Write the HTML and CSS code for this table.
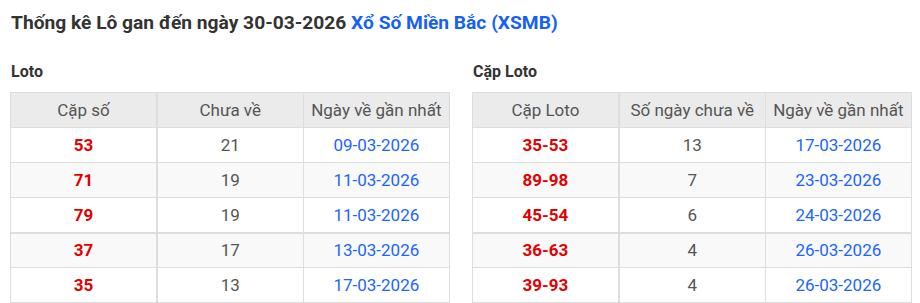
FILE: index.html
```html
<!DOCTYPE html>
<html lang="vi">
<head>
<meta charset="utf-8">
<link rel="stylesheet" href="styles.css">
</head>
<body>
<h2 class="title">Thống kê Lô gan đến ngày 30-03-2026 <span class="title-link">Xổ Số Miền Bắc (XSMB)</span></h2>
<div class="panels">
  <section class="panel">
    <h3 class="panel-title">Loto</h3>
    <table class="gan">
      <thead>
        <tr><th>Cặp số</th><th>Chưa về</th><th>Ngày về gần nhất</th></tr>
      </thead>
      <tbody>
        <tr><td class="num">53</td><td>21</td><td class="date">09-03-2026</td></tr>
        <tr class="alt"><td class="num">71</td><td>19</td><td class="date">11-03-2026</td></tr>
        <tr><td class="num">79</td><td>19</td><td class="date">11-03-2026</td></tr>
        <tr class="alt split"><td class="num">37</td><td>17</td><td class="date">13-03-2026</td></tr>
        <tr><td class="num">35</td><td>13</td><td class="date">17-03-2026</td></tr>
      </tbody>
    </table>
  </section>
  <section class="panel">
    <h3 class="panel-title">Cặp Loto</h3>
    <table class="gan">
      <thead>
        <tr><th>Cặp Loto</th><th>Số ngày chưa về</th><th>Ngày về gần nhất</th></tr>
      </thead>
      <tbody>
        <tr><td class="num">35-53</td><td>13</td><td class="date">17-03-2026</td></tr>
        <tr class="alt"><td class="num">89-98</td><td>7</td><td class="date">23-03-2026</td></tr>
        <tr><td class="num">45-54</td><td>6</td><td class="date">24-03-2026</td></tr>
        <tr class="alt split"><td class="num">36-63</td><td>4</td><td class="date">26-03-2026</td></tr>
        <tr><td class="num">39-93</td><td>4</td><td class="date">26-03-2026</td></tr>
      </tbody>
    </table>
  </section>
</div>
</body>
</html>
```
FILE: styles.css
```css
html, body {
  margin: 0;
  padding: 0;
  background: #fff;
}
body {
  font-family: Roboto, "Liberation Sans", Arial, sans-serif;
  color: #333;
  padding: 0 10px;
}
.title {
  margin: 0;
  padding-top: 11px;
  font-size: 19.2px;
  line-height: 24px;
  font-weight: 700;
  color: #333;
  padding-left: 1px;
}
.title-link {
  color: #1560f5;
}
.panels {
  display: flex;
  gap: 22px;
  margin-top: 27px;
}
.panel {
  width: 440px;
}
.panel-title {
  margin: 0 0 11px 1px;
  font-size: 16px;
  line-height: 19px;
  font-weight: 700;
  color: #333;
}
.gan {
  width: 440px;
  border-collapse: collapse;
  table-layout: fixed;
  font-size: 17px;
}
.gan th, .gan td {
  border: 1px solid #dddddd;
  padding: 0;
  height: 34px;
  line-height: 34px;
  text-align: center;
  white-space: nowrap;
}
.gan th {
  background: #ebebeb;
  font-weight: 400;
  color: #555;
}
.gan td {
  color: #555;
}
.gan th:first-child, .gan td:first-child {
  border-right: 2px solid #dddddd;
}
.gan .alt td {
  background: #f9f9f9;
}
.gan .split td {
  border-top: 2px solid #dddddd;
  height: 33px;
  line-height: 33px;
}
.gan td.num {
  color: #e30000;
  font-weight: 700;
}
.gan td.date {
  color: #1a66ff;
}
```
